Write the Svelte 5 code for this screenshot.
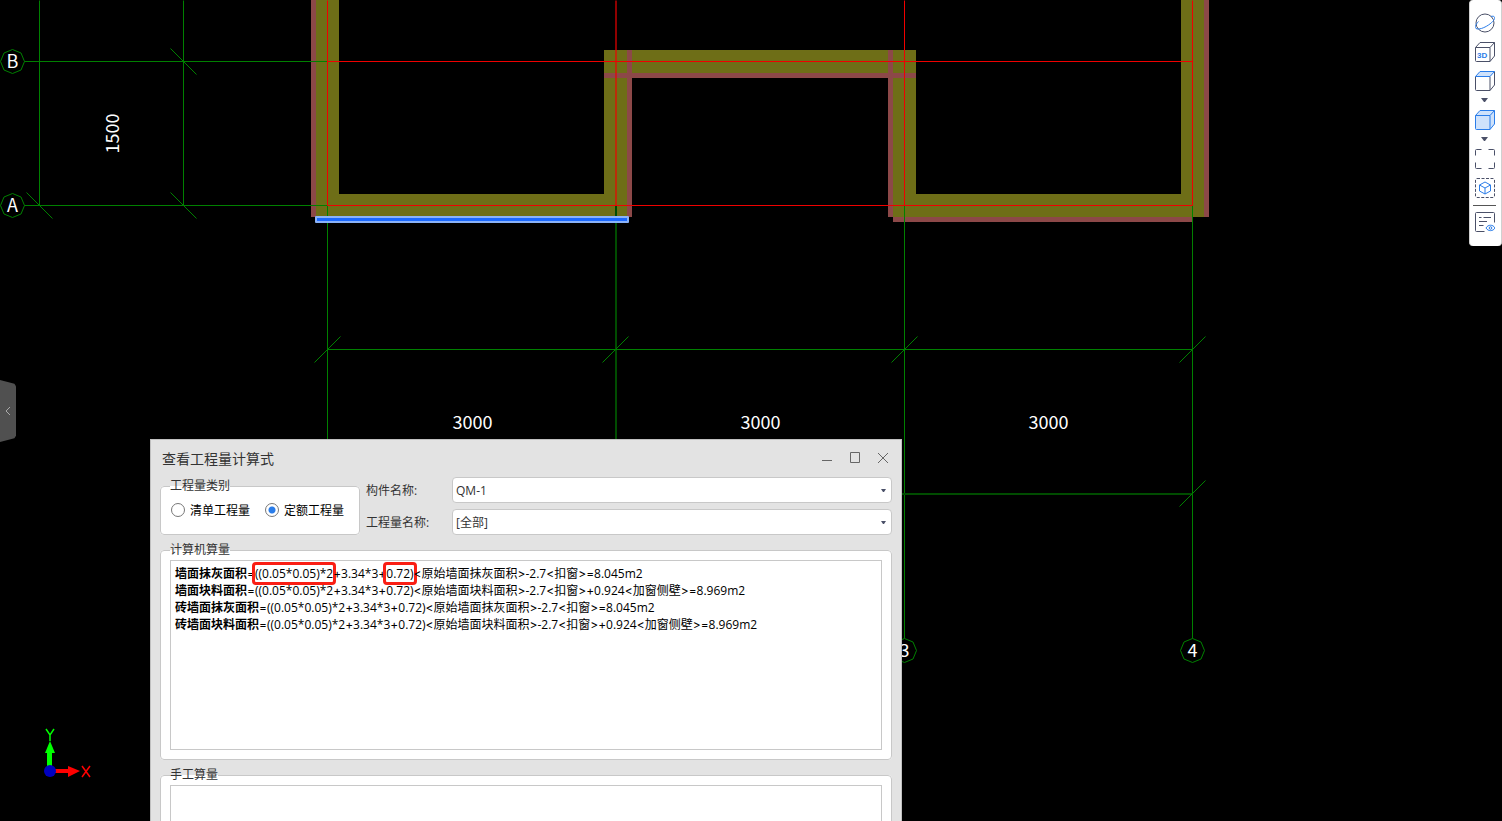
<script lang="ts">
  type Line = { x1: number; y1: number; x2: number; y2: number; dim?: boolean }
  type Rect = { x: number; y: number; w: number; h: number }

  let category = 'quota'
  let component = 'QM-1'
  let quantity = '[全部]'
  let manual = ''

  const walls: Rect[] = [
    { x: 316, y: 0, w: 23, h: 217 },
    { x: 339, y: 194, w: 265, h: 23 },
    { x: 604, y: 50, w: 24, h: 167 },
    { x: 628, y: 50, w: 265, h: 23 },
    { x: 893, y: 50, w: 23, h: 167 },
    { x: 916, y: 194, w: 265, h: 23 },
    { x: 1181, y: 0, w: 23, h: 217 }
  ]

  const finishes: Rect[] = [
    { x: 311, y: 0, w: 5, h: 217 },
    { x: 627, y: 50, w: 5, h: 167 },
    { x: 604, y: 73, w: 312, h: 5 },
    { x: 888, y: 50, w: 5, h: 167 },
    { x: 893, y: 217, w: 300, h: 5 },
    { x: 1204, y: 0, w: 5, h: 217 }
  ]

  const grid: Line[] = [
    { x1: 24, y1: 61, x2: 327, y2: 61 },
    { x1: 24, y1: 205, x2: 327, y2: 205 },
    { x1: 39, y1: 0, x2: 39, y2: 205 },
    { x1: 183, y1: 0, x2: 183, y2: 205 },
    { x1: 327, y1: 205, x2: 327, y2: 638 },
    { x1: 615.5, y1: 205, x2: 615.5, y2: 638, dim: true },
    { x1: 904, y1: 205, x2: 904, y2: 638 },
    { x1: 1192, y1: 205, x2: 1192, y2: 638 },
    { x1: 327, y1: 349, x2: 1192, y2: 349 },
    { x1: 327, y1: 493.5, x2: 1192, y2: 493.5, dim: true }
  ]

  const axes: Line[] = [
    { x1: 327, y1: 61, x2: 1192, y2: 61 },
    { x1: 327, y1: 205, x2: 1192, y2: 205 },
    { x1: 327, y1: 0, x2: 327, y2: 205 },
    { x1: 615.5, y1: 0, x2: 615.5, y2: 205, dim: true },
    { x1: 904, y1: 0, x2: 904, y2: 205 },
    { x1: 1192, y1: 0, x2: 1192, y2: 205 }
  ]

  const fallingTicks = [[183, 61], [183, 205], [39, 205]]
  const risingTicks = [[327, 349], [615, 349], [904, 349], [1192, 349], [1192, 493]]

  const bubbles = [
    { x: 12, y: 61, label: 'B' },
    { x: 12, y: 205, label: 'A' },
    { x: 904, y: 650, label: '3' },
    { x: 1192, y: 650, label: '4' }
  ]

  const spans = [472, 760, 1048]

  const formulas = [
    {
      name: '墙面抹灰面积',
      source: '<原始墙面抹灰面积>-2.7<扣窗>=8.045m2',
      marked: true
    },
    {
      name: '墙面块料面积',
      source: '<原始墙面块料面积>-2.7<扣窗>+0.924<加窗侧壁>=8.969m2'
    },
    {
      name: '砖墙面抹灰面积',
      source: '<原始墙面抹灰面积>-2.7<扣窗>=8.045m2'
    },
    {
      name: '砖墙面块料面积',
      source: '<原始墙面块料面积>-2.7<扣窗>+0.924<加窗侧壁>=8.969m2'
    }
  ]

  const tokens = (text: string) => text.split(/([<>=+])/).filter(Boolean)
  const isOperator = (token: string) => '<>=+'.includes(token)
</script>

<main class="workspace">
  <svg class="drawing" role="img" aria-label="CAD">
    <g class="wall">
      {#each walls as r}
        <rect x={r.x} y={r.y} width={r.w} height={r.h} />
      {/each}
    </g>
    <g class="finish">
      {#each finishes as r}
        <rect x={r.x} y={r.y} width={r.w} height={r.h} />
      {/each}
    </g>

    <g class="grid" transform="translate(0.5 0.5)">
      {#each grid as l}
        <line class:dim={l.dim} x1={l.x1} y1={l.y1} x2={l.x2} y2={l.y2} />
      {/each}
      {#each fallingTicks as [x, y]}
        <line x1={x - 13} y1={y - 13} x2={x + 13} y2={y + 13} />
      {/each}
      {#each risingTicks as [x, y]}
        <line x1={x - 13} y1={y + 13} x2={x + 13} y2={y - 13} />
      {/each}
    </g>

    <g class="axis" transform="translate(0.5 0.5)">
      {#each axes as l}
        <line class:dim={l.dim} x1={l.x1} y1={l.y1} x2={l.x2} y2={l.y2} />
      {/each}
    </g>

    <!-- selected finish -->
    <rect class="selected" x="315" y="216" width="314" height="7" rx="1" />
    <rect class="selected-core" x="317" y="218" width="310" height="3" />

    <g transform="translate(0.5 0.5)">
      {#each bubbles as b}
        <g transform="translate({b.x} {b.y})">
          <path class="bubble" d="M0-12 8.5-8.5 12 0 8.5 8.5 0 12-8.5 8.5-12 0-8.5-8.5Z" />
          <text y="6">{b.label}</text>
        </g>
      {/each}

      {#each spans as x}
        <text {x} y="428">3000</text>
      {/each}
      <text transform="translate(118 133) rotate(-90)">1500</text>
    </g>

    <g class="ucs">
      <rect x="47" y="751" width="5" height="18" fill="#00ff00" />
      <path d="M50 741 55 753H45Z" fill="#00ff00" />
      <rect x="54" y="769" width="15" height="4" fill="#ff0000" />
      <path d="M80 771 68 766V777Z" fill="#ff0000" />
      <circle cx="50" cy="771" r="6" fill="#0000c0" />
      <path d="M46 729 50 735 54 729M50 735V741" stroke="#00ff00" stroke-width="1.500" />
      <path d="M82 766 90 777M90 766 82 777" stroke="#ff0000" stroke-width="1.500" />
    </g>
  </svg>

  <button class="drawer" aria-label="展开">
    <svg width="6" height="8" viewBox="0 0 6 8"><path d="M5 0 1 4 5 8" /></svg>
  </button>

  <nav class="tools">
    <button aria-label="动态观察">
      <svg viewBox="0 0 20 20">
        <circle cx="10" cy="10" r="9" />
        <path class="blue" d="M3.500 8.500C.5 11.500-.5 14.500 1 15.500c2.500 1.500 8-.5 12.500-3.500S20.500 5.500 19.500 4c-.6-.9-2-.9-3.500-.6" />
      </svg>
    </button>
    <button aria-label="三维">
      <svg viewBox="0 0 20 20">
        <path d="M.5 5.500 5 .5H19.500V14L15 19.500H1.500q-1 0-1-1ZM.5 5.500H15V19.500M15 5.500 19.500.5" />
        <text class="three-d" x="2" y="16">3D</text>
      </svg>
    </button>
    <button aria-label="俯视">
      <svg viewBox="0 0 20 20">
        <path d="M.5 5.500V18.500q0 1 1 1H15V5.500M15 19.500 19.500 14V.5" />
        <path class="blue tint" d="M.5 5.500 5 .5H19.500L15 5.500Z" />
      </svg>
    </button>
    <button class="more" aria-label="更多视图">
      <svg class="arrow" viewBox="0 0 7 4"><path d="M0 0H7L4 4H3Z" /></svg>
    </button>
    <button aria-label="实体">
      <svg viewBox="0 0 20 20">
        <path class="blue tint" d="M.5 5.500 5 .5H19.500V14L15 19.500H1.500q-1 0-1-1ZM.5 5.500H15V19.500M15 5.500 19.500.5" />
      </svg>
    </button>
    <button class="more" aria-label="更多样式">
      <svg class="arrow" viewBox="0 0 7 4"><path d="M0 0H7L4 4H3Z" /></svg>
    </button>
    <button aria-label="全屏">
      <svg viewBox="0 0 20 20">
        <path d="M.5 6.500V1.500q0-1 1-1H6.500M13.500.5H18.500q1 0 1 1V6.500M19.500 13.500V18.500q0 1-1 1H13.500M6.500 19.500H1.500q-1 0-1-1V13.500" />
      </svg>
    </button>
    <button aria-label="局部三维">
      <svg viewBox="0 0 20 20">
        <rect x="0.500" y="0.500" width="19" height="19" rx="1.500" stroke-dasharray="3 1.500" />
        <path class="blue" d="M10 4 15.500 7V13L10 16 4.500 13V7ZM4.500 7 10 10 15.500 7M10 10V16" />
      </svg>
    </button>
    <hr />
    <button aria-label="显示设置">
      <svg viewBox="0 0 20 20">
        <path d="M9.500 19.500H1.500q-1 0-1-1V1.500q0-1 1-1H18.500q1 0 1 1V10.500M4 5.500H6.500M8.500 5.500H16M4 9.500H12M4 13.500H8.500" />
        <path class="blue" d="M11 16C13 12.300 18 12.300 20 16 18 19.500 13 19.500 11 16Z" />
        <circle class="blue" cx="15.500" cy="16" r="1.300" />
      </svg>
    </button>
  </nav>

  <section class="dialog" aria-label="查看工程量计算式">
    <header>
      <h1>查看工程量计算式</h1>
      <button aria-label="最小化"><svg viewBox="0 0 12 12"><path d="M1 8.500H11" /></svg></button>
      <button aria-label="最大化"><svg viewBox="0 0 12 12"><path d="M1.500.5H10.500V10.500H1.500Z" /></svg></button>
      <button aria-label="关闭"><svg viewBox="0 0 12 12"><path d="M1 1 11 11M11 1 1 11" /></svg></button>
    </header>

    <div class="body">
      <div class="filters">
        <fieldset class="category">
          <legend>工程量类别</legend>
          <label><input type="radio" bind:group={category} value="list" />清单工程量</label>
          <label><input type="radio" bind:group={category} value="quota" />定额工程量</label>
        </fieldset>

        <div class="fields">
          <label for="component">构件名称:</label>
          <div class="combo">
            <select id="component" bind:value={component}>
              <option>QM-1</option>
            </select>
            <svg class="arrow" viewBox="0 0 5 3"><path d="M0 0H5L3 3H2Z" /></svg>
          </div>
          <label for="quantity">工程量名称:</label>
          <div class="combo">
            <select id="quantity" bind:value={quantity}>
              <option>[全部]</option>
            </select>
            <svg class="arrow" viewBox="0 0 5 3"><path d="M0 0H5L3 3H2Z" /></svg>
          </div>
        </div>
      </div>

      <fieldset>
        <legend>计算机算量</legend>
        <div class="result">
          {#each formulas as f}
            <p>
              <b>{f.name}</b><i>=</i><span class:mark={f.marked}>((0.05*0.05)*2</span><i>+</i>3.34*3<i>+</i><span
                class:mark={f.marked}>0.72)</span>{#each tokens(f.source) as t}{#if isOperator(t)}<i>{t}</i>{:else}{t}{/if}{/each}
            </p>
          {/each}
        </div>
      </fieldset>

      <fieldset>
        <legend>手工算量</legend>
        <textarea aria-label="手工算量" bind:value={manual}></textarea>
      </fieldset>
    </div>
  </section>
</main>

<style>
  :global(body) {
    background: #000;
  }
  .workspace {
    position: relative;
    height: 100vh;
    overflow: hidden;
    background: #000;
    font-family: 'Open Sans', 'Noto Sans CJK SC', sans-serif;
    font-size: 12px;
    color: #000;
  }
  button {
    display: flex;
    align-items: center;
    justify-content: center;
    padding: 0;
    border: 0;
    background: none;
    cursor: pointer;
  }
  svg {
    fill: none;
  }

  .drawing {
    display: block;
    width: 100%;
    height: 100%;
  }
  .wall {
    fill: #6e6e17;
  }
  .finish {
    fill: #8c4848;
  }
  .grid {
    stroke: #008000;
  }
  .grid .dim {
    stroke: #004c00;
    stroke-width: 2px;
  }
  .axis {
    stroke: #f00000;
  }
  .axis .dim {
    stroke-width: 2px;
    opacity: 0.6;
  }
  .selected {
    fill: #8ab2f8;
  }
  .selected-core {
    fill: #1a68ff;
  }
  .bubble {
    stroke: #008000;
  }
  .drawing text {
    fill: #fff;
    font-family: 'Noto Sans CJK SC', sans-serif;
    font-size: 18px;
    text-anchor: middle;
  }

  .drawer {
    position: absolute;
    top: 380px;
    left: 0;
    width: 16px;
    height: 62px;
    background: #505050;
    clip-path: polygon(0 0, 90% 6%, 100% 10%, 100% 90%, 90% 94%, 0 100%);
  }
  .drawer svg {
    stroke: #aaa;
  }

  .tools {
    position: absolute;
    top: 0;
    right: 0;
    display: flex;
    flex-direction: column;
    width: 33px;
    padding: 8px 2px 10px 0;
    box-sizing: border-box;
    border: solid #d0d0d0;
    border-width: 0 1px;
    border-radius: 4px;
    background: #fff;
  }
  .tools button {
    height: 29px;
  }
  .tools button.more {
    height: 10px;
  }
  .tools svg {
    width: 20px;
    height: 20px;
    stroke: #4a5068;
  }
  .tools .blue {
    stroke: #2b7de9;
  }
  .tools .tint {
    fill: #cfe2fb;
  }
  .three-d {
    fill: #2b7de9;
    stroke: none;
    font-size: 8px;
    font-weight: 700;
  }
  .tools hr {
    width: 23px;
    height: 1px;
    margin: 3px auto 1px;
    border: 0;
    background: #555;
  }
  svg.arrow,
  .tools svg.arrow {
    width: 7px;
    height: 4px;
    fill: #4a5068;
    stroke: none;
  }

  .dialog {
    position: absolute;
    top: 439px;
    left: 150px;
    width: 752px;
    box-sizing: border-box;
    border: 1px solid #c0c0c0;
    background: #e3e3e3;
  }
  header {
    display: flex;
    align-items: center;
    height: 37px;
    padding: 0 4px 2px 11px;
    box-sizing: border-box;
  }
  h1 {
    flex: 1;
    margin: 0;
    font-size: 14px;
    font-weight: 400;
    color: #333;
  }
  header button {
    width: 28px;
    height: 28px;
  }
  header svg {
    width: 12px;
    height: 12px;
    stroke: #666;
  }
  .body {
    display: flex;
    flex-direction: column;
    gap: 6px;
    padding: 0 9px 9px;
  }
  .filters {
    display: flex;
    gap: 6px;
  }
  fieldset {
    min-width: 0;
    margin: 0;
    padding: 1px 9px 9px;
    border: 1px solid #c8c8c8;
    border-radius: 4px;
    background: #fff;
  }
  legend {
    padding: 0;
    line-height: 18px;
    color: #333;
  }
  .category {
    display: flex;
    gap: 14px;
    width: 200px;
    height: 58px;
    box-sizing: border-box;
  }
  .category label {
    display: flex;
    align-items: center;
    gap: 5px;
    height: 28px;
    white-space: nowrap;
  }
  input[type='radio'] {
    appearance: none;
    width: 14px;
    height: 14px;
    margin: 0;
    margin-left: 1px;
    box-sizing: border-box;
    border: 1px solid #777;
    border-radius: 50%;
    background: #fff;
  }
  input[type='radio']:checked {
    background: radial-gradient(circle, #2b7de9 3px, #fff 4px);
  }
  .fields {
    flex: 1;
    display: grid;
    grid-template-columns: 86px 1fr;
    row-gap: 6px;
    align-items: center;
    color: #333;
  }
  .combo {
    display: flex;
    position: relative;
  }
  select {
    appearance: none;
    width: 100%;
    height: 26px;
    padding: 0 16px 0 3px;
    border: 1px solid #c8c8c8;
    border-radius: 4px;
    background: #fff;
    font: inherit;
    color: #333;
  }
  .combo .arrow {
    position: absolute;
    right: 6px;
    top: 12px;
    width: 5px;
    height: 3px;
    pointer-events: none;
  }
  .result,
  textarea {
    display: block;
    width: 100%;
    height: 190px;
    padding: 4px;
    box-sizing: border-box;
    border: 1px solid #c8c8c8;
    background: #fff;
  }
  textarea {
    resize: none;
    font: inherit;
  }
  p {
    margin: 0;
    line-height: 17px;
    white-space: nowrap;
  }
  /* operators inside a formula */
  i {
    font-family: Inter, sans-serif;
    font-style: normal;
    line-height: 1;
  }
  .mark {
    display: inline-block;
    height: 17px;
    border-radius: 1px;
    outline: 3px solid #fa1e14;
  }
</style>
